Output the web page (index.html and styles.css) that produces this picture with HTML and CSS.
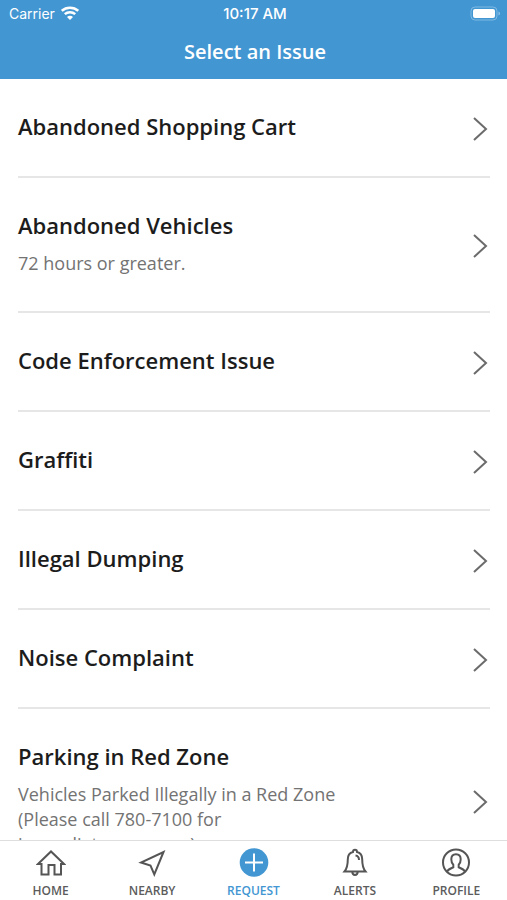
FILE: index.html
```html
<!DOCTYPE html>
<html lang="en">
<head>
<meta charset="utf-8">
<meta name="viewport" content="width=device-width, initial-scale=1">
<title>Select an Issue</title>
<link rel="stylesheet" href="styles.css">
</head>
<body>
<div class="app">
  <header class="header">
    <div class="status">
      <div class="carrier">
        <span>Carrier</span>
        <svg width="18" height="14" viewBox="0 0 18 14" fill="none" stroke="#fff" stroke-width="2.5" aria-hidden="true">
          <path d="M.8 4.800C5.300.6 12.700.6 17.200 4.800M3.800 8.200c2.900-2.700 7.500-2.700 10.400 0"/>
          <path d="M6 10.900c1.700-1.500 4.300-1.500 6 0L9 14z" fill="#fff" stroke="none"/>
        </svg>
      </div>
      <time class="clock">10:17 AM</time>
      <svg class="battery" width="31" height="15" viewBox="0 0 31 15" aria-hidden="true">
        <rect x="1" y="1" width="26" height="13" rx="4" fill="none" stroke="#7fb8e2"/>
        <rect x="3" y="3" width="22" height="9" rx="2" fill="#fff"/>
        <path d="M28.500 5.500v4c2-.7 2-3.300 0-4z" fill="#8fc2e8"/>
      </svg>
    </div>
    <h1 class="title">Select an Issue</h1>
  </header>
  <main class="content">
    <ul class="issues">
      <li><a class="issue" href="#cart"><span class="text"><span class="name">Abandoned Shopping Cart</span></span><svg class="chevron" viewBox="0 0 16 24" aria-hidden="true"><path d="M2 1l12 11L2 23"/></svg></a></li>
      <li><a class="issue" href="#vehicles"><span class="text"><span class="name">Abandoned Vehicles</span><span class="note">72 hours or greater.</span></span><svg class="chevron" viewBox="0 0 16 24" aria-hidden="true"><path d="M2 1l12 11L2 23"/></svg></a></li>
      <li><a class="issue" href="#code"><span class="text"><span class="name">Code Enforcement Issue</span></span><svg class="chevron" viewBox="0 0 16 24" aria-hidden="true"><path d="M2 1l12 11L2 23"/></svg></a></li>
      <li><a class="issue" href="#graffiti"><span class="text"><span class="name">Graffiti</span></span><svg class="chevron" viewBox="0 0 16 24" aria-hidden="true"><path d="M2 1l12 11L2 23"/></svg></a></li>
      <li><a class="issue" href="#dumping"><span class="text"><span class="name">Illegal Dumping</span></span><svg class="chevron" viewBox="0 0 16 24" aria-hidden="true"><path d="M2 1l12 11L2 23"/></svg></a></li>
      <li><a class="issue" href="#noise"><span class="text"><span class="name">Noise Complaint</span></span><svg class="chevron" viewBox="0 0 16 24" aria-hidden="true"><path d="M2 1l12 11L2 23"/></svg></a></li>
      <li><a class="issue" href="#parking"><span class="text"><span class="name">Parking in Red Zone</span><span class="note">Vehicles Parked Illegally in a Red Zone<br>(Please call 780-7100 for<br>immediate response)</span></span><svg class="chevron" viewBox="0 0 16 24" aria-hidden="true"><path d="M2 1l12 11L2 23"/></svg></a></li>
    </ul>
  </main>
  <nav class="tabs">
    <a class="tab" href="#home">
      <svg class="icon" viewBox="0 0 30 30" aria-hidden="true"><path d="M2 16L15 3.500 28 16h-3v10.500h-6.500V17h-6v9.500H5.500V16z"/></svg>
      <span>HOME</span>
    </a>
    <a class="tab" href="#nearby">
      <svg class="icon" viewBox="0 0 30 30" aria-hidden="true"><path d="M26.500 4L17.300 26.500l-3.800-9L4 14.500z"/></svg>
      <span>NEARBY</span>
    </a>
    <a class="tab active" href="#request" aria-current="page">
      <svg class="icon" viewBox="0 0 30 30" aria-hidden="true"><circle cx="15" cy="14.500" r="14.300" fill="#4296d2" stroke="none"/><path d="M15 5.500v18M6 14.500h18" stroke="#fff"/></svg>
      <span>REQUEST</span>
    </a>
    <a class="tab" href="#alerts">
      <svg class="icon" viewBox="0 0 30 30" aria-hidden="true"><path d="M13 4c0-3 4-3 4 0 3.500.8 5.200 3.500 5.200 7.300 0 5.500.6 9 3.300 12.200h-21c2.700-3.200 3.300-6.700 3.300-12.200C7.800 7.500 9.500 4.800 13 4zM12.300 23.800c0 4.200 5.400 4.200 5.400 0M15.500 7.500c2.300.3 3.500 1.800 3.500 4.500"/></svg>
      <span>ALERTS</span>
    </a>
    <a class="tab" href="#profile">
      <svg class="icon" viewBox="0 0 30 30" aria-hidden="true"><circle cx="15" cy="14.500" r="13"/><path d="M6 23.500c1-2.200 3.500-3 6.300-4.200v-2.500c-1.500-1.500-2-3.500-2-5.500 0-3.300 1.800-5 4.700-5s4.700 1.700 4.700 5c0 2-.5 4-2 5.500v2.500c2.800 1.200 5.300 2 6.300 4.200"/></svg>
      <span>PROFILE</span>
    </a>
  </nav>
</div>
</body>
</html>
```
FILE: styles.css
```css
* {
  box-sizing: border-box;
}

body {
  margin: 0;
  background: #fff;
  color: #1c1c1c;
  font-family: "Open Sans", sans-serif;
}

a {
  color: inherit;
  text-decoration: none;
}

.app {
  display: flex;
  flex-direction: column;
  height: 100vh;
}

.header {
  flex: none;
  padding: 3px 6px 12px 9px;
  background: #4296d2;
  color: #fff;
}

.status {
  display: grid;
  grid-template-columns: 1fr auto 1fr;
  align-items: center;
  height: 20px;
  font-family: Inter, sans-serif;
  font-size: 14px;
}

.carrier {
  display: flex;
  align-items: center;
  gap: 6px;
}

.clock {
  font-size: 15px;
  font-weight: 500;
}

.battery {
  justify-self: end;
}

.title {
  margin: 14px 0 0;
  font-size: 20px;
  font-weight: 600;
  line-height: 30px;
  text-align: center;
}

.content {
  flex: 1;
  min-height: 0;
  overflow: hidden;
}

.issues {
  margin: 0;
  padding: 0 17px 0 18px;
  list-style: none;
}

.issue {
  display: flex;
  align-items: center;
  justify-content: space-between;
  gap: 16px;
  padding: 32px 2px 30px 0;
  border-bottom: 2px solid #e6e6e6;
}

.text {
  display: flex;
  flex-direction: column;
  gap: 11px;
  padding-bottom: 5px;
}

.name {
  font-size: 22px;
  font-weight: 600;
  line-height: 30px;
}

.note {
  color: #737373;
  font-size: 18px;
  line-height: 25px;
}

.chevron {
  flex: none;
  width: 16px;
  height: 24px;
  fill: none;
  stroke: #6b6b6b;
  stroke-width: 2;
}

.tabs {
  display: flex;
  flex: none;
  height: 60px;
  padding-top: 7px;
  border-top: 1px solid #dedede;
  background: #fff;
}

.tab {
  display: flex;
  flex: 1;
  flex-direction: column;
  align-items: center;
  gap: 5px;
  color: #5c5c5c;
  font-size: 12px;
  font-weight: 600;
  line-height: 16px;
}

.active {
  color: #4296d2;
}

.icon {
  width: 30px;
  height: 30px;
  fill: none;
  stroke: #555;
  stroke-width: 2;
}
```
